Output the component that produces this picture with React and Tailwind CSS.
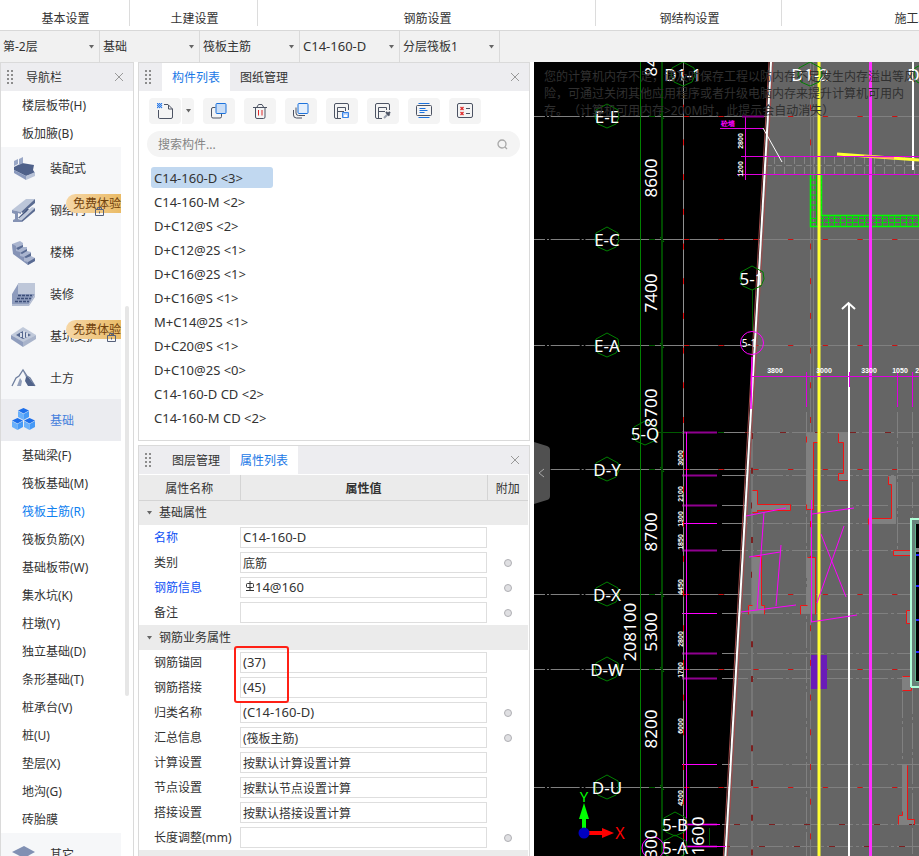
import { useState } from "react";

const menuTabs = [
  { label: "基本设置", width: "w-[130px]" },
  { label: "土建设置", width: "w-32" },
  { label: "钢筋设置", width: "w-[338px]" },
  { label: "钢结构设置", width: "w-[186px]" },
  { label: "施工段设置", width: "w-[284px]" },
];

const selectors = [
  { label: "楼层", value: "第-2层" },
  { label: "构件类型", value: "基础" },
  { label: "构件", value: "筏板主筋" },
  { label: "名称", value: "C14-160-D", latin: true },
  { label: "分层", value: "分层筏板1" },
];

const navItems = [
  { label: "楼层板带(H)" },
  { label: "板加腋(B)" },
  { label: "装配式", icon: "precast" },
  { label: "钢结构", icon: "steel", trial: true },
  { label: "楼梯", icon: "stairs" },
  { label: "装修", icon: "decor" },
  { label: "基坑支护", icon: "pit", trial: true },
  { label: "土方", icon: "earth" },
  { label: "基础", icon: "base" },
  { label: "基础梁(F)" },
  { label: "筏板基础(M)" },
  { label: "筏板主筋(R)" },
  { label: "筏板负筋(X)" },
  { label: "基础板带(W)" },
  { label: "集水坑(K)" },
  { label: "柱墩(Y)" },
  { label: "独立基础(D)" },
  { label: "条形基础(T)" },
  { label: "桩承台(V)" },
  { label: "桩(U)" },
  { label: "垫层(X)" },
  { label: "地沟(G)" },
  { label: "砖胎膜" },
  { label: "其它", icon: "other" },
];

const components = [
  "C14-160-D <3>",
  "C14-160-M <2>",
  "D+C12@S <2>",
  "D+C12@2S <1>",
  "D+C16@2S <1>",
  "D+C16@S <1>",
  "M+C14@2S <1>",
  "D+C20@S <1>",
  "D+C10@2S <0>",
  "C14-160-D CD <2>",
  "C14-160-M CD <2>",
];

const baseProps = [
  { name: "名称", value: "C14-160-D", key: true, latin: true },
  { name: "类别", value: "底筋", extra: true },
  { name: "钢筋信息", value: "14@160", key: true, latin: true, rebar: true, extra: true },
  { name: "备注", value: "", extra: true },
];

const rebarProps = [
  { name: "钢筋锚固", value: "(37)", latin: true, marked: true },
  { name: "钢筋搭接", value: "(45)", latin: true },
  { name: "归类名称", value: "(C14-160-D)", latin: true, extra: true },
  { name: "汇总信息", value: "(筏板主筋)", extra: true },
  { name: "计算设置", value: "按默认计算设置计算" },
  { name: "节点设置", value: "按默认节点设置计算" },
  { name: "搭接设置", value: "按默认搭接设置计算" },
  { name: "长度调整(mm)", value: "", extra: true },
];

function App() {
  return (
    <div className="flex h-screen flex-col overflow-hidden bg-white font-['Noto_Sans','Noto_Sans_CJK_SC',sans-serif] text-xs text-[#333]">
      <nav className="flex h-[31px] shrink-0 overflow-hidden border-b border-[#d8d8d8]">
        {menuTabs.map((tab) => (
          <button
            className={`h-[26px] shrink-0 border-r border-[#dcdcdc] pl-0.5 pt-[11px] leading-4 ${tab.width}`}
            key={tab.label}
            type="button"
          >
            {tab.label}
          </button>
        ))}
      </nav>

      <div className="flex h-[31px] shrink-0 bg-[#f1f1f1]">
        {selectors.map((item) => (
          <label className="relative flex w-[100px] border-r border-[#dadada]" key={item.label}>
            <select
              aria-label={item.label}
              className={`w-full appearance-none bg-transparent pl-[3px] outline-none ${item.latin ? "text-[13px]" : ""}`}
            >
              <option>{item.value}</option>
            </select>
            <Caret className="absolute right-[5px] top-[14px]" />
          </label>
        ))}
      </div>

      <main className="flex min-h-0 flex-1 gap-1">
        <NavPanel />
        <div className="flex w-[392px] shrink-0 flex-col gap-1">
          <ComponentPanel />
          <PropertyPanel />
        </div>
        <DrawingView />
      </main>
    </div>
  );
}

function NavPanel() {
  const [active, setActive] = useState("筏板主筋(R)");

  return (
    <aside className="flex w-[134px] shrink-0 flex-col border-x border-t border-[#dadada]">
      <div className="flex h-7 shrink-0 items-center bg-[#ededf0] pl-1.5 pr-[9px]">
        <DragDots />
        <h2 className="ml-3 flex-1 pt-0.5">导航栏</h2>
        <CloseButton />
      </div>
      <div className="flex min-h-0 flex-1 overflow-hidden">
        <ul className="w-[120px] shrink-0">
          {navItems.map((item) =>
            item.icon ? (
              <CategoryItem item={item} key={item.label} />
            ) : (
              <li key={item.label}>
                <button
                  className={`block h-7 w-full pl-[21px] pt-0.5 text-left ${active === item.label ? "text-[#1081f0]" : ""}`}
                  onClick={() => setActive(item.label)}
                  type="button"
                >
                  {item.label}
                </button>
              </li>
            )
          )}
        </ul>
        <div className="ml-1 mt-[215px] h-[390px] w-1 rounded-full bg-[#e6e6e6]" />
      </div>
    </aside>
  );
}

function CategoryItem({ item }) {
  const open = item.icon === "base";
  return (
    <li className="relative">
      <button
        className={`flex h-[42px] w-full items-center gap-3.5 pl-2.5 text-left ${open ? "bg-[#ebecf0] text-[#4580dc]" : "bg-[#f6f7f9]"}`}
        type="button"
      >
        <NavIcon name={item.icon} />
        <span className="pt-0.5">{item.label}</span>
      </button>
      {item.trial && (
        <>
          <span className="absolute right-0 top-[5px] h-[19px] rounded-l-full bg-linear-to-r from-[#f6d7a6] to-[#eabb66] pl-[7px] leading-5 text-[#70420d]">
            免费体验
          </span>
          <svg
            className={`absolute top-[17px] ${item.icon === "pit" ? "right-1" : "right-4"}`}
            fill="none"
            height="11"
            stroke="#55607a"
            width="11"
          >
            <path d="M1.500 3.500h8v6h-8zM3.500 3V1.500h4V3M5.500 5.500v2" />
          </svg>
        </>
      )}
    </li>
  );
}

function ComponentPanel() {
  const [selected, setSelected] = useState(components[0]);

  return (
    <section className="shrink-0 border border-[#dadada] pb-3">
      <PanelTabs active="构件列表" tabs={["构件列表", "图纸管理"]} />
      <div className="flex gap-[9px] pl-2.5 pt-[7px]">
        <div className="flex gap-px">
          <ToolButton label="新建" name="new" />
          <button aria-label="新建选项" className="flex h-[26px] w-3 items-center justify-center rounded-r bg-[#f4f4f4]" type="button">
            <Caret />
          </button>
        </div>
        <ToolButton label="复制" name="copy" />
        <ToolButton label="删除" name="delete" />
        <ToolButton label="层间复制" name="layers" />
        <ToolButton label="存档" name="save" />
        <ToolButton label="提取" name="pick" />
        <ToolButton label="排序" name="sort" />
        <ToolButton label="未使用" name="unused" />
      </div>
      <label className="ml-2 mr-[9px] mt-[7px] flex h-[26px] items-center rounded-full bg-[#f4f4f4] pl-[11px] pr-3">
        <input
          aria-label="搜索构件"
          className="min-w-0 flex-1 bg-transparent pt-0.5 outline-none placeholder:text-[#858585]"
          placeholder="搜索构件..."
        />
        <svg fill="none" height="11" stroke="#a8a8a8" strokeWidth="1.300" width="11">
          <circle cx="5" cy="5" r="4" />
          <path d="m8 8 2 2" />
        </svg>
      </label>
      <ul className="ml-3 mt-2.5 flex flex-col gap-[3px] text-[13px]">
        {components.map((name) => (
          <li key={name}>
            <button
              className={`block h-[21px] w-[122px] whitespace-nowrap rounded-[3px] pl-[3px] text-left leading-5 ${selected === name ? "bg-[#c1d8f0]" : ""}`}
              onClick={() => setSelected(name)}
              type="button"
            >
              {name}
            </button>
          </li>
        ))}
      </ul>
    </section>
  );
}

function PropertyPanel() {
  return (
    <section className="min-h-0 flex-1 overflow-hidden border-x border-t border-[#dadada]">
      <PanelTabs active="属性列表" tabs={["图层管理", "属性列表"]} />
      <div className="pr-px pt-px">
        <table className="w-full table-fixed border-collapse">
          <colgroup>
            <col className="w-[101px]" />
            <col />
            <col className="w-[41px]" />
          </colgroup>
          <thead>
            <tr className="h-[25px] bg-[#ebebeb]">
              <th className="border-b border-r border-[#d4d4d4] p-0 pt-[3px] font-normal">属性名称</th>
              <th className="border-b border-r border-[#d4d4d4] p-0 pt-[3px] font-bold">属性值</th>
              <th className="border-b border-[#d4d4d4] p-0 pt-[3px] font-normal">附加</th>
            </tr>
          </thead>
          <tbody>
            <GroupRow title="基础属性" />
            {baseProps.map((prop) => (
              <PropertyRow key={prop.name} prop={prop} />
            ))}
            <GroupRow title="钢筋业务属性" />
            {rebarProps.map((prop) => (
              <PropertyRow key={prop.name} prop={prop} />
            ))}
            <tr className="h-[25px] bg-[#ebebeb]">
              <td colSpan={3} />
            </tr>
          </tbody>
        </table>
      </div>
    </section>
  );
}

function GroupRow({ title }) {
  return (
    <tr className="h-[25px]">
      <th className="bg-[#ebebeb] p-0 text-left font-normal" colSpan={3}>
        <button className="flex items-center gap-[7px] pl-2" type="button">
          <Caret />
          {title}
        </button>
      </th>
    </tr>
  );
}

function PropertyRow({ prop }) {
  return (
    <tr className="h-[25px]">
      <td className={`whitespace-nowrap p-0 pl-[15px] pt-px ${prop.key ? "text-[#0f52f5]" : ""}`}>
        <label htmlFor={prop.name}>{prop.name}</label>
      </td>
      <td className="relative p-0">
        <div className="flex h-[21px] items-center border border-[#dedede] bg-white pl-0.5">
          {prop.rebar && (
            <svg className="ml-0.5 shrink-0" fill="none" height="14" stroke="#333" width="10">
              <path d="M5 0v10M1 9.500h8" />
              <rect height="4" rx="1" width="7" x="1.500" y="2.500" />
            </svg>
          )}
          <input
            className={`h-[19px] w-full bg-transparent outline-none ${prop.latin ? "pb-px text-[13px]" : ""}`}
            defaultValue={prop.value}
            id={prop.name}
          />
        </div>
        {prop.marked && (
          <span className="pointer-events-none absolute -left-1.5 -top-1 z-10 h-[57px] w-[55px] rounded-[3px] border-2 border-[#ff2015]" />
        )}
      </td>
      <td className="p-0">
        {prop.extra && (
          <input
            aria-label={`${prop.name}附加`}
            className="mx-auto block size-2 appearance-none rounded-full border border-[#b0b0b4] bg-[#dfdfe2]"
            type="checkbox"
          />
        )}
      </td>
    </tr>
  );
}

function PanelTabs({ active, tabs }) {
  return (
    <div className="flex h-7 items-center bg-[#ededf0] pl-1.5 pr-[9px]">
      <DragDots />
      <div className="ml-2.5 flex h-full flex-1">
        {tabs.map((tab) => (
          <button
            className={`h-full w-[68px] pt-0.5 ${tab === active ? "bg-white text-[#1a78e6]" : ""}`}
            key={tab}
            type="button"
          >
            {tab}
          </button>
        ))}
      </div>
      <CloseButton />
    </div>
  );
}

function DragDots() {
  return (
    <svg fill="#8c8c8c" height="14" width="7">
      {[0, 4, 8, 12].map((y) => (
        <path d={`M0 ${y}h2v2h-2zM4 ${y}h2v2h-2z`} key={y} />
      ))}
    </svg>
  );
}

function CloseButton() {
  return (
    <button aria-label="关闭" type="button">
      <svg fill="none" height="10" stroke="#999" width="10">
        <path d="m1 1 8 8M9 1 1 9" />
      </svg>
    </button>
  );
}

function Caret({ className = "" }) {
  return (
    <svg className={className} fill="#666" height="4" width="5">
      <path d="M0 0h5L2.500 3.500z" />
    </svg>
  );
}

function ToolButton({ label, name }) {
  return (
    <button aria-label={label} className="flex h-[26px] w-8 items-center justify-center rounded bg-[#f4f4f4]" type="button">
      <svg fill="none" height="16" stroke="#4c5363" width="16">
        {toolIcons[name]}
      </svg>
    </button>
  );
}

const toolIcons = {
  new: (
    <>
      <path d="M7 1.500h4l4.500 4.500v8q0 1.500-1.500 1.500H2.500Q1.500 15.500 1.500 14V7M11.500 2v4h4" />
      <path d="M0 0h1v1H0zM2 0h1v1H2zM4 0h1v1H4zM1 1h1v1H1zM3 1h1v1H3zM0 2h1v1H0zM2 2h1v1H2zM4 2h1v1H4zM1 3h1v1H1zM3 3h1v1H3zM0 4h1v1H0zM2 4h1v1H2zM4 4h1v1H4z" fill="#2f7de6" stroke="#2f7de6" strokeWidth=".300" />
    </>
  ),
  copy: (
    <>
      <path d="M4.500 4.500H2Q.5 4.500.5 6v7.500Q.5 15 2 15h7q1.500 0 1.500-1.500V11" />
      <rect fill="#c9ddf6" height="10" rx="1" stroke="#1c72dc" width="10" x="5" y=".500" />
    </>
  ),
  delete: (
    <>
      <path d="M1 4.500h14M3.500 5v9q0 1.500 1.500 1.500h6.500q1.500 0 1.500-1.500V5M5 4l1.500-2.500h3.500L11.500 4" />
      <path d="M6.500 7v5.500M10 7v5.500" stroke="#e02b2b" />
    </>
  ),
  layers: (
    <>
      <path d="M3 4.500V10q0 2.500 2.500 2.500H12M.5 7v5q0 3 3 3H9" />
      <rect fill="#e4effc" height="10" rx="1" stroke="#1c72dc" width="10" x="5" y=".500" />
    </>
  ),
  save: (
    <>
      <path d="M7 15.500H2Q.5 15.500.5 14V2Q.5.500 2 .500h11q1.500 0 1.500 1.500v5M3.500 15V4.500h8V8M4 8.500h6" />
      <path d="M8.500 9.500h6v5h-6z" fill="#a8c8f5" stroke="#3b86e8" />
      <path d="M10.500 14v-2h2v2" fill="#fff" stroke="#fff" />
    </>
  ),
  pick: (
    <>
      <path d="M7 15.500H2Q.5 15.500.5 14V2Q.5.500 2 .500h11q1.500 0 1.500 1.500v5M3.500 15V4.500h8V7M4 8.500h6" />
      <path d="m9 15 4-4" stroke="#9aa1ae" strokeWidth="2" />
      <path d="m11 9 3.500 3.500M13 11l2-2" strokeWidth="2" />
    </>
  ),
  sort: (
    <>
      <rect height="10" rx="1" width="15" x=".5" y="2.500" />
      <path d="M2.500.500h11M2.500 14.500h11M3.500 5.500h6M3.500 7.500h8M3.500 9.500h5" stroke="#1c72dc" />
    </>
  ),
  unused: (
    <>
      <rect height="14" rx="1.500" width="15" x=".5" y=".500" />
      <path d="M9 5.500h4M9 10.500h4" />
      <path d="m3.500 4 3 3M6.500 4l-3 3M3.500 9l3 3M6.500 9l-3 3" stroke="#e02b2b" strokeWidth="1.300" />
    </>
  ),
};

function NavIcon({ name }) {
  return (
    <svg className="shrink-0" height="25" viewBox="0 0 25 25" width="25">
      {navIcons[name]}
    </svg>
  );
}

function Cube({ x, y }) {
  return (
    <g transform={`translate(${x} ${y})`}>
      <path d="M6 0 11.500 2.500 6 5.500.500 2.500z" fill="#1d6fea" />
      <path d="M.500 3 6 6v6L.500 9z" fill="#69b0fb" />
      <path d="M11.500 3 6 6v6l5.500-3z" fill="#479af6" />
    </g>
  );
}

const navIcons = {
  precast: (
    <>
      <path d="m3 11 8-4 12 2-1 5 2 3-9 3-12-6z" fill="#4f618a" />
      <path d="m3 14 12 6v4L3 17z" fill="#8a99bd" />
      <path d="m15 20 9-4v4l-9 4z" fill="#b9c3d8" />
      <path d="m3 5 4-2v5l-4 2zM8 3l4-2v6L8 9z" fill="#9aa8c7" />
    </>
  ),
  steel: (
    <>
      <path d="m1 12 14-11h9L10 14z" fill="#bcc6d9" />
      <path d="M10 14 24 1v4L12 15z" fill="#5a6b91" />
      <path d="m1 12 9 2v2l-3-1v6l4 1v2l-9 0v-2l2-1v-5l-3-1z" fill="#8593b4" />
      <path d="m7 20 9-9 2 0-7 9z" fill="#42547c" />
      <path d="m7 21 14-12 3 1-13 12z" fill="#c0c9db" />
      <path d="m11 22 13-12v3L11 24z" fill="#5a6b91" />
    </>
  ),
  stairs: (
    <>
      <path d="m1 4 8-3 3 2v4l4 0v4l4 1v4l4 2v3l-7 4L2 12z" fill="#aab5cf" />
      <path d="m1 4 4 2v5l4 1v4l4 1v4l4 1v3L2 14z" fill="#8593b6" />
      <path d="m5 8 7-3v2l-5 3zM9 13l7-4v2l-5 3zM13 17l7-4v3l-5 2zM17 22l7-4v3l-7 4z" fill="#586a92" />
    </>
  ),
  decor: (
    <>
      <path d="m1 12 6-10v11L1 23z" fill="#8e9cbd" />
      <path d="M7 1h17v11H7z" fill="#bec7d9" />
      <path d="M7 12h17l-6 10H1z" fill="#8d9bbb" />
      <path d="m7 13.500 14 0M6 16.500h14M4 19.500h14" stroke="#3c4e78" strokeDasharray="3 1" strokeWidth="1.500" />
      <path d="M1 22h17l6-10v3l-6 9H1z" fill="#b1bbd0" />
    </>
  ),
  pit: (
    <>
      <path d="m0 11 12-8 13 8-13 8z" fill="#c0c9da" />
      <path d="m5 11 7-4 8 4-8 4z" fill="#55678f" />
      <path d="M0 11l12 7v5L0 15z" fill="#8f9dbd" />
      <path d="m25 11-13 7v5l13-8z" fill="#a9b4cb" />
      <path d="M9 9h2v4H9zM12 7h2v7h-2zM15 9h2v4h-2z" fill="#d6dce7" />
    </>
  ),
  earth: (
    <>
      <path d="m1 20 4-8 3-2 4-6 4 6 3 2 5 8" fill="none" stroke="#6f7f9f" strokeWidth="1.300" />
      <path d="m6 20 3-8 2 3-1 5z" fill="#93a0bb" />
      <path d="m12 5 3 6-1 4 3 5h7l-6-8-3-2z" fill="#51638a" />
    </>
  ),
  base: (
    <>
      <Cube x={6.500} y={0} />
      <Cube x={0.500} y={10} />
      <Cube x={12.500} y={10} />
    </>
  ),
  other: (
    <>
      <path d="m1 17 12-6 11 6-11 6z" fill="#b6c0d5" />
      <path d="m1 10 12-6 11 6-11 6z" fill="#8190b3" />
    </>
  ),
};

const axisRows = [
  { label: "E-E", y: 54 },
  { label: "E-C", y: 177 },
  { label: "E-A", y: 283 },
  { label: "D-Y", y: 407 },
  { label: "D-X", y: 532 },
  { label: "D-W", y: 607 },
  { label: "D-U", y: 725 },
];

const subRows = [
  { y: 370 },
  { y: 413 },
  { y: 443 },
  { y: 461, bright: true },
  { y: 488 },
  { y: 551, bright: true },
  { y: 591 },
  { y: 616 },
  { y: 702, bright: true },
  { y: 762 },
  { y: 784 },
];

const spans = [
  { text: "8400", x: 116, y: -5 },
  { text: "8600", x: 116, y: 116 },
  { text: "7400", x: 116, y: 231 },
  { text: "8700", x: 116, y: 346 },
  { text: "8700", x: 116, y: 470 },
  { text: "5300", x: 116, y: 570 },
  { text: "208100", x: 95, y: 570 },
  { text: "8200", x: 116, y: 667 },
  { text: "5300", x: 116, y: 787 },
  { text: "1600", x: 163, y: 774 },
];

const smallSpans = [
  { text: "2800", x: 206, y: 79 },
  { text: "1200", x: 206, y: 107 },
  { text: "3000", x: 146, y: 396 },
  { text: "2100", x: 146, y: 432 },
  { text: "1300", x: 146, y: 457 },
  { text: "1850", x: 146, y: 480 },
  { text: "4450", x: 146, y: 525 },
  { text: "2800", x: 146, y: 577 },
  { text: "1700", x: 146, y: 608 },
  { text: "6000", x: 146, y: 664 },
  { text: "4200", x: 146, y: 736 },
];

// fill is the concrete, line the outline that stays visible against the slab
const walls = [
  { fill: "M272 371h12v9h-5v67h-7z", line: "M284 371v9h-5v67M272 442v5h7M272 374v6" },
  { fill: "M304 371h11v47h-11v-7h5v-31h-5z", line: "M304 371v9h5v31h-5v7h11" },
  { fill: "M218 428h5v14h33v6h-33v2h-5z", line: "M218 428h5v14h33v6h-33v2h-5" },
  { fill: "M354 414h8v48h-28v-6h23v-34h-3z", line: "M354 414v8h3v34h-23v6" },
  { fill: "M359 488h18v5h-18z", line: "M377 488h-18v5h18" },
  { fill: "M218 494h9v49h3v9h-16v-9h4z", line: "M218 494h9v49h3v9M218 543h-4v9" },
  { fill: "M273 495h8v57h-15v-9h7z", line: "M273 495h8v57M273 543h-7v9" },
  { fill: "M368 614h9v15h-9z", line: "M377 614h-9M368 628h9v-3" },
  { fill: "M372 548h5v13h-5z", line: "M377 548h-5v13h5" },
  { fill: "M368 703h5v54h7v5h-16v-9h4z", line: "M373 703v54h7v5M368 749v4h-4v9" },
];

function DrawingView() {
  return (
    <section aria-label="绘图区" className="relative min-w-0 flex-1 overflow-hidden bg-black">
      <svg className="absolute inset-0 size-full font-['Noto_Sans',sans-serif]" fill="none">
        <path d="M237 0H2000V2000H122z" fill="#656565" />

        {/* axis grid */}
        {axisRows.map((row) => (
          <g key={row.label}>
            <path d={`M0 ${row.y + 0.5}H2000`} stroke="#808080" strokeDasharray="29 2 2 1.700" strokeDashoffset="18" />
            <path d={`M115 ${row.y + 0.5}h6`} stroke="#005a00" />
            <path d={`M150 ${row.y + 0.5}H2000`} stroke="#d01010" strokeDasharray="5 29.700" />
            <path d={`m126 ${row.y - 2} 4 5`} stroke="#008000" />
          </g>
        ))}
        {subRows.map((row) => (
          <g key={row.y}>
            <path d={`M188 ${row.y + 0.5}H2000`} stroke="#808080" strokeDasharray="26 3 3 3" />
            <path d={`M148 ${row.y + 0.5}H183`} stroke={row.bright ? "#f0f" : "#900090"} strokeWidth={row.bright ? 1 : 2} />
          </g>
        ))}
        <path d="M124 370.500h26M184 370.500h6M175.500 766v18" stroke="#005a00" />
        <path d="M211 370.500H385M200 762.500H385M190 784.500H385" stroke="#7c2020" strokeDasharray="6 29" />
        <path d="M106.500 0V2000" stroke="#008000" />
        <path d="M128 0V2000" stroke="#004a00" strokeWidth="2" />
        <path d="M149.500 0V2000" stroke="#909090" />
        <path d="M149.500 8V2000" stroke="#e01010" strokeDasharray="6 28.700" />
        <path d="M152.500 370V785" stroke="#f0f" />
        <path d="M218 371V2000" stroke="#777" strokeWidth="2" />
        <path d="M218 371V2000" stroke="#7c2020" strokeDasharray="6 28.700" strokeWidth="2" />
        <path d="M276.500 0V2000M279.500 0V370" stroke="#7d7d7d" />
        <path d="M276.500 8V2000" stroke="#d01818" strokeDasharray="6 28.700" />
        <path d="M272.500 350V2000M363.500 350V490M368.500 630V700M378.500 350V456M378.500 626V2000" stroke="#808080" strokeDasharray="26 3 3 3" />

        {walls.map((wall) => (
          <g key={wall.fill}>
            <path d={wall.fill} fill="#808080" />
            <path d={wall.line} stroke="#f01414" transform="translate(0.5 0.5)" />
          </g>
        ))}
        <path d="M277 593h16v34h-16z" fill="#6a1bb8" />

        {/* brick strip and retaining walls */}
        <path d="M232 103.500H2000" stroke="#858585" strokeDasharray="6 4" />
        <path d="M240.500 95v17M250.500 95v17M260.500 95v17M270.500 95v17M280.500 95v17M290.500 95v17M300.500 95v17M310.500 95v17M320.500 95v17M330.500 95v17M340.500 95v17M350.500 95v17M360.500 95v17M370.500 95v17M380.500 95v17" stroke="#858585" strokeDasharray="7 3" />
        <path d="M276.500 112.500h11v41H2000M276.500 112v52.500H2000" stroke="#0f0" strokeWidth="1.500" />
        <path d="M277 118h11M277 123h11M277 128h11M277 133h11M277 138h11M277 143h11M277 148h11M277 156.500h108M277 160.500h108" stroke="#00e000" strokeDasharray="6 1" />
        <path d="M282.500 113v50" stroke="#00c000" />
        <path d="M288 159H385" stroke="#00e000" strokeDasharray="1 5" strokeWidth="10" />

        {/* raft edge */}
        <path d="M235 0 189 800M239 0 193 800" stroke="#a04a4a" />
        <path d="M237 0 191 800" stroke="#fff" strokeWidth="2" />

        <path d="M285 0V2000" stroke="#ffff32" strokeWidth="3" />
        <path d="M336.500 0V2000" stroke="#ff30ff" strokeWidth="3" />
        <path d="M315 242V2000M379 0V108M308 247l6.500-6 6.500 6" stroke="#fff" strokeWidth="2" />
        <path d="m303 92 82 6" stroke="#ffff32" strokeWidth="3" />
        <path d="m330 94 30 2" stroke="#ff9070" strokeWidth="2" />

        {/* magenta dimensions */}
        <path d="M211.500 55v63M203 112.500H2000M207 94.500H2000M186 66.500h43" stroke="#e000e0" />
        <path d="M218 314.500H2000M272.500 310v35M315.500 310v15M363.500 310v35M378.500 310v35" stroke="#e000e0" />
        <path d="M208 54.500h22" stroke="#900090" strokeWidth="2" />
        <path d="m218 295-1 52" stroke="#f0f" strokeWidth="1.500" />
        <path d="m229 66 19 34" stroke="#fff" />
        <path d="m212 454 40-8M230 450l-7 98M215 495l31-5M247 483l-5 61M207 550l55-7M277.500 438v122M278 452l42-6M287 472l25 63M310 464l-27 77M277 560l46-7M150 762.500h36M150 784.500h42" stroke="#f0f" />
        <text fill="#f0f" fontSize="7" fontWeight="bold" x="187" y="64">砼墙</text>

        {/* lift shaft */}
        <path d="M376 456H2000V625H376z" fill="#68827a" />
        <path d="M382 462H2000V619H382z" fill="#000" />
        <path d="M377 625V457H2000M377 625H2000" stroke="#b0ffd8" strokeWidth="2" />
        <path d="M381.500 619V462M381.500 619.500H2000" stroke="#5fb58c" />
        <path d="M382 488h10" stroke="#808080" strokeWidth="4" />
        <path d="M382 493h10M382 524h10M382 558h10M382 590h10" stroke="#22f" strokeWidth="2" />

        {/* axis labels */}
        {axisRows.map((row) => (
          <Bubble key={row.label} label={row.label} x={73} y={row.y} />
        ))}
        <path d="M218.500 228v42" stroke="#005a00" />
        <Bubble label="D1-1" x={149} y={12} />
        <Bubble label="D1-2" x={276} y={12} />
        <Bubble label="D1-3" x={392} y={12} />
        <Bubble label="5-1" x={218} y={216} />
        <Bubble label="5-Q" x={111} y={371} />
        <Bubble label="5-B" x={141} y={762} />
        <Bubble label="5-A" x={141} y={785} />
        <circle cx="218" cy="281" r="11.500" stroke="#f0f" />
        <text fill="#fff" fontSize="10" textAnchor="middle" x="215" y="285">5-1</text>
        <circle cx="119" cy="786" r="11" stroke="#f0f" />

        {spans.map((span) => (
          <VerticalText key={`${span.x}-${span.y}`} size={17} span={span} />
        ))}
        <g className="font-['Liberation_Sans',sans-serif]" fontWeight="bold">
          {smallSpans.map((span) => (
            <VerticalText key={`${span.x}-${span.y}`} size={7} span={span} />
          ))}
          <g fill="#fff" fontSize="7" textAnchor="middle">
            <text x="241" y="311">3800</text>
            <text x="290" y="311">3000</text>
            <text x="335" y="311">3300</text>
            <text x="366" y="311">1050</text>
            <text x="389" y="311">2100</text>
          </g>
        </g>

        {/* coordinate gizmo */}
        <path d="M50 771V752" stroke="#0f0" strokeWidth="4" />
        <path d="m50 741 5 16H45z" fill="#0f0" />
        <path d="M50 771h20" stroke="#f00" strokeWidth="4" />
        <path d="m80 771-12-5v10z" fill="#f00" />
        <circle cx="50" cy="771" fill="#0000c0" r="5.500" />
        <text fill="#0f0" fontSize="15" textAnchor="middle" x="50" y="740">Y</text>
        <text fill="#f00" fontSize="16" textAnchor="middle" x="86" y="777">X</text>
      </svg>

      <p className="absolute left-2.5 top-[6px] whitespace-nowrap leading-[17px] text-[#303030] [text-spacing-trim:space-all]">
        <span className="block">您的计算机内存不足，请及时保存工程以防内存不足发生内存溢出等风</span>
        <span className="block">险，可通过关闭其他应用程序或者升级电脑内存来提升计算机可用内</span>
        <span className="block">存。（计算机可用内存&gt;200M时，此提示会自动消失）</span>
      </p>

      <button aria-label="收起面板" className="absolute left-0 top-[380px]" type="button">
        <svg fill="none" height="62" width="16">
          <path d="m0 0 13 4q3 1 3 4v46q0 3-3 4L0 62z" fill="#505050" />
          <path d="m10 27-5 4 5 4" stroke="#aaa" />
        </svg>
      </button>
    </section>
  );
}

function Bubble({ label, x, y }) {
  return (
    <g transform={`translate(${x} ${y})`}>
      <path d="M0-12 11-6 12 1 9 8 0 12-9 8-12 1-11-6z" stroke="#008000" />
      <text fill="#fff" fontSize="17" textAnchor="middle" y="7">
        {label}
      </text>
    </g>
  );
}

function VerticalText({ size, span }) {
  return (
    <text
      dominantBaseline="central"
      fill="#fff"
      fontSize={size}
      textAnchor="middle"
      transform={`translate(${span.x} ${span.y}) rotate(-90)`}
    >
      {span.text}
    </text>
  );
}

export default App;
